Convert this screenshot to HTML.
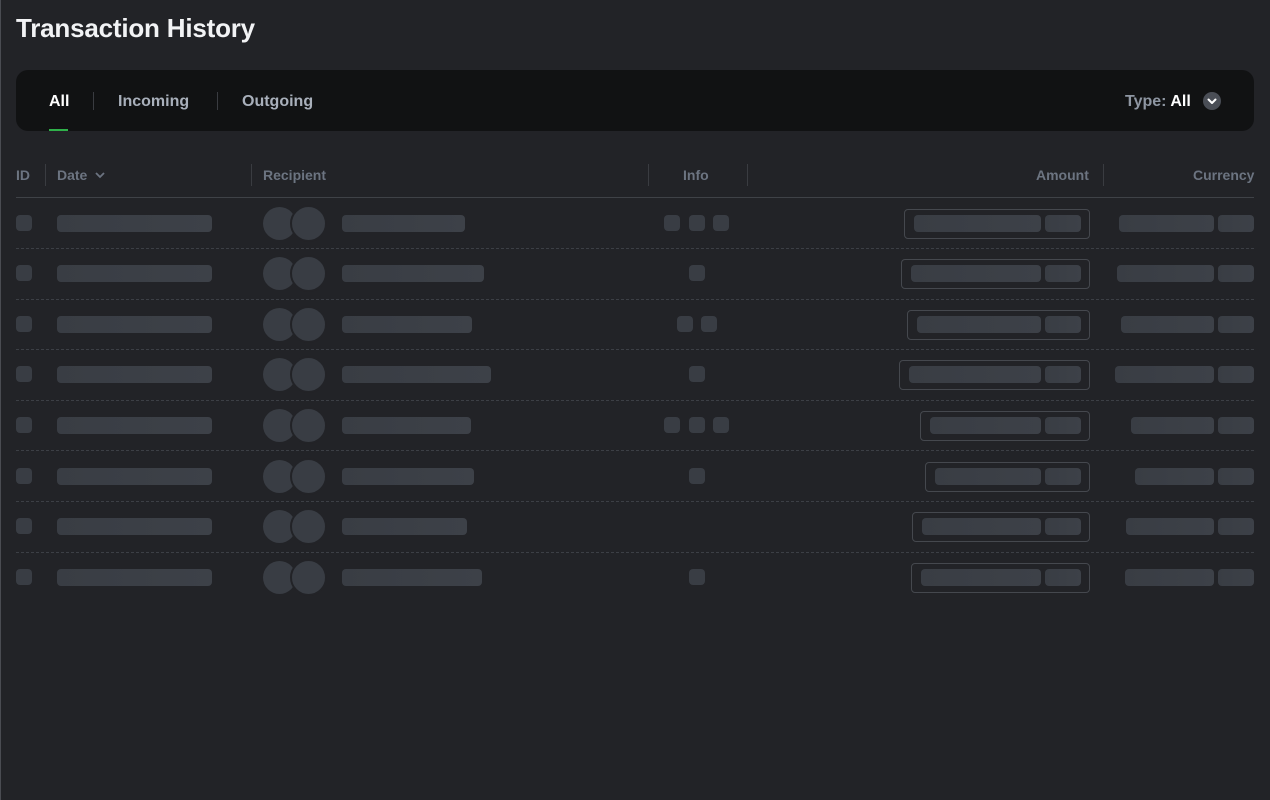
<!DOCTYPE html>
<html><head><meta charset="utf-8"><style>
*{margin:0;padding:0;box-sizing:border-box}
body{width:1270px;height:800px;background:#222327;font-family:"Liberation Sans",sans-serif;position:relative;overflow:hidden}
.a{position:absolute}
h1{position:absolute;left:16px;top:13px;font-size:26px;font-weight:700;color:#f2f3f5;letter-spacing:-0.2px}
.bar{left:16px;top:70px;width:1238px;height:61px;background:#111213;border-radius:12px}
.tab{top:93px;font-size:16px;font-weight:700;color:#a9b0bb}
.vs{width:1px;background:#3a3c41}
.th{top:167px;font-size:14px;font-weight:700;color:#6c7481}
.sk{position:absolute;height:17px;border-radius:4px;background:linear-gradient(90deg,#393d44,#3d4148);}
.sq{position:absolute;width:16px;height:16px;border-radius:4px;background:#393d44}
.c1,.c2{position:absolute;width:33px;height:33px;border-radius:50%;background:#393d44}
.c2{width:37px;height:37px;border:2px solid #222327}
.box{position:absolute;height:30px;border:1px solid #45484e;border-radius:4px}
.dash{position:absolute;left:16px;width:1238px;border-top:1px dashed #3c3f45}
</style></head><body>
<div class="a" style="left:0;top:0;width:1px;height:800px;background:#4a4c52"></div>
<h1>Transaction History</h1>
<div class="a bar"></div>
<div class="a tab" style="left:49px;color:#fff">All</div>
<div class="a" style="left:49px;top:129px;width:19px;height:2px;background:#2fb14a"></div>
<div class="a vs" style="left:93px;top:92px;height:18px"></div>
<div class="a tab" style="left:118px">Incoming</div>
<div class="a vs" style="left:217px;top:92px;height:18px"></div>
<div class="a tab" style="left:242px">Outgoing</div>
<div class="a tab" style="left:1125px;color:#8e96a2">Type: <span style="color:#fff">All</span></div>
<div class="a" style="left:1203px;top:92px;width:18px;height:18px;border-radius:50%;background:#4a4e56"><svg width="18" height="18" viewBox="0 0 18 18"><path d="M5.5 7.5L9 11l3.5-3.5" stroke="#fff" stroke-width="2" fill="none" stroke-linecap="round" stroke-linejoin="round"/></svg></div>

<div class="a th" style="left:16px">ID</div>
<div class="a vs" style="left:45px;top:164px;height:22px"></div>
<div class="a th" style="left:57px">Date <svg width="12" height="10" viewBox="0 0 12 10" style="margin-left:3px"><path d="M2 3l4 4 4-4" stroke="#6c7481" stroke-width="1.8" fill="none"/></svg></div>
<div class="a vs" style="left:251px;top:164px;height:22px"></div>
<div class="a th" style="left:263px">Recipient</div>
<div class="a vs" style="left:648px;top:164px;height:22px"></div>
<div class="a th" style="left:683px">Info</div>
<div class="a vs" style="left:747px;top:164px;height:22px"></div>
<div class="a th" style="left:1036px">Amount</div>
<div class="a vs" style="left:1103px;top:164px;height:22px"></div>
<div class="a th" style="left:1193px">Currency</div>
<div class="a" style="left:16px;top:197px;width:1238px;height:1px;background:#3f4247"></div>
<div id="rows"></div>
<script>
var nm=[465,484,472,491,471,474,467,482];
var info=[3,1,2,1,3,1,0,1];
var amt=[904,901,907,899,920,925,912,911];
var cur=[1119,1117,1121,1115,1131,1135,1126,1125];
var h='';
for(var i=0;i<8;i++){
 var cy=223+i*50.6, t=Math.round(cy-8.5);
 h+='<div class="sq" style="left:16px;top:'+(t)+'px"></div>';
 h+='<div class="sk" style="left:57px;top:'+t+'px;width:155px"></div>';
 h+='<div class="c1" style="left:263px;top:'+Math.round(cy-16.5)+'px"></div>';
 h+='<div class="c2" style="left:290px;top:'+Math.round(cy-18.5)+'px"></div>';
 h+='<div class="sk" style="left:342px;top:'+t+'px;width:'+(nm[i]-342)+'px"></div>';
 var xs=info[i]==3?[664,689,713]:info[i]==2?[677,701]:info[i]==1?[689]:[];
 xs.forEach(function(x){h+='<div class="sq" style="left:'+x+'px;top:'+t+'px"></div>';});
 h+='<div class="box" style="left:'+amt[i]+'px;top:'+Math.round(cy-14.5)+'px;width:'+(1090-amt[i])+'px"></div>';
 h+='<div class="sk" style="left:'+(amt[i]+10)+'px;top:'+t+'px;width:'+(1041-amt[i]-10)+'px"></div>';
 h+='<div class="sk" style="left:1045px;top:'+t+'px;width:36px"></div>';
 h+='<div class="sk" style="left:'+cur[i]+'px;top:'+t+'px;width:'+(1214-cur[i])+'px"></div>';
 h+='<div class="sk" style="left:1218px;top:'+t+'px;width:36px"></div>';
 if(i<7)h+='<div class="dash" style="top:'+Math.round(cy+25)+'px"></div>';
}
document.getElementById('rows').innerHTML=h;
</script>
</body></html>
